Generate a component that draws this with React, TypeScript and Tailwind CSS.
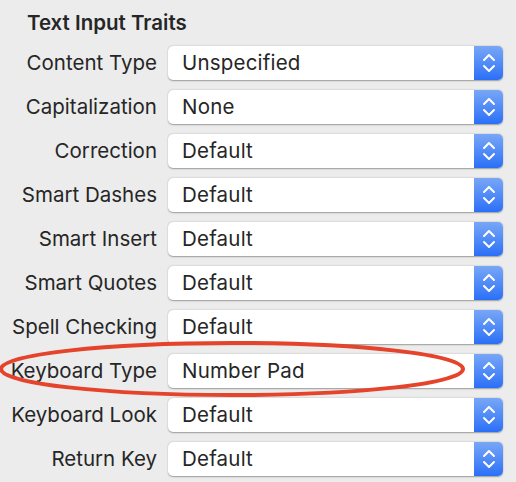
const rows: [string, string][] = [
  ['Content Type', 'Unspecified'],
  ['Capitalization', 'None'],
  ['Correction', 'Default'],
  ['Smart Dashes', 'Default'],
  ['Smart Insert', 'Default'],
  ['Smart Quotes', 'Default'],
  ['Spell Checking', 'Default'],
  ['Keyboard Type', 'Number Pad'],
  ['Keyboard Look', 'Default'],
  ['Return Key', 'Default'],
]

function Stepper() {
  return (
    <div className="flex w-[29px] items-center justify-center rounded-r-[5px] bg-gradient-to-b from-[#78a6f6] to-[#2a6ff7]">
      <svg width="14" height="24" viewBox="0 0 14 24" fill="none" stroke="white" strokeWidth="2" strokeLinecap="round" strokeLinejoin="round">
        <path d="M2 9 L7 4 L12 9" />
        <path d="M2 15 L7 20 L12 15" />
      </svg>
    </div>
  )
}

function Popup({ value }: { value: string }) {
  return (
    <div className="flex h-[34px] w-[335px] rounded-[5px] bg-white shadow-[0_0.5px_1.5px_rgba(0,0,0,0.35)]">
      <div className="flex flex-1 items-center pl-[14px] text-[20.5px] tracking-[0.2px] text-[#262626]">{value}</div>
      <Stepper />
    </div>
  )
}

export default function App() {
  return (
    <div
      className="relative h-[482px] w-[516px] overflow-hidden bg-[#ececec]"
      style={{ fontFamily: 'Inter, "Liberation Sans", sans-serif' }}
    >
      <div className="pl-[27px] pt-[10px] text-[20.5px] font-semibold leading-[26px] text-[#262626]">Text Input Traits</div>
      <div className="mt-[10px] flex flex-col gap-[10px]">
        {rows.map(([label, value]) => (
          <div key={label} className="flex items-center">
            <div className="w-[157px] text-right text-[20.5px] text-[#262626]">{label}</div>
            <div className="ml-[11px]">
              <Popup value={value} />
            </div>
          </div>
        ))}
      </div>
      <svg className="pointer-events-none absolute left-0 top-0" width="516" height="482">
        <ellipse cx="232" cy="369" rx="231" ry="26" fill="none" stroke="#e5432b" strokeWidth="4" />
      </svg>
    </div>
  )
}
